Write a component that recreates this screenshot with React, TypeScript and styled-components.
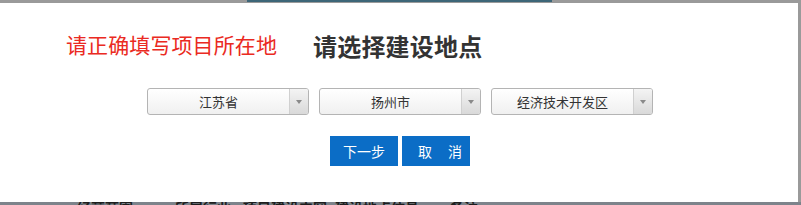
import React from "react";
import styled, { createGlobalStyle } from "styled-components";

const GlobalStyle = createGlobalStyle`
  html, body {
    margin: 0;
    padding: 0;
    background: #9a9a9a;
    overflow: hidden;
  }
  body {
    font-family: "Noto Sans CJK SC", "Noto Sans", sans-serif;
  }
`;

const Page = styled.div`
  width: 801px;
  height: 205px;
  display: flex;
  flex-direction: column;
  background: #9a9a9a;
  overflow: hidden;
`;

const TopStrip = styled.div`
  height: 3px;
  display: flex;
  align-items: flex-start;
  padding-left: 247px;
`;

const TealLine = styled.div`
  width: 305px;
  height: 2px;
  background: #3d6678;
`;

const Dialog = styled.div`
  width: 798px;
  height: 199px;
  background: #ffffff;
  display: flex;
  flex-direction: column;
  box-sizing: border-box;
`;

const Header = styled.div`
  display: flex;
  align-items: center;
  height: 40px;
  margin-top: 23px;
  padding-left: 66px;
`;

const Hint = styled.div`
  font-size: 21px;
  color: #ea2a22;
  line-height: 1;
  width: 247px;
  margin-top: -4px;
  letter-spacing: 0.1px;
`;

const Title = styled.h1`
  margin: 0;
  font-size: 24px;
  font-weight: 700;
  color: #333333;
  line-height: 1;
  letter-spacing: 0.2px;
`;

const SelectRow = styled.div`
  display: flex;
  justify-content: center;
  gap: 10px;
  margin-top: 22px;
  padding-left: 2px;
`;

const SelectBox = styled.div`
  width: 162px;
  height: 27px;
  box-sizing: border-box;
  border: 1px solid #b4b4b4;
  border-radius: 3px;
  display: flex;
  background: linear-gradient(#ffffff, #f0f0f0);
  overflow: hidden;
`;

const SelectText = styled.div`
  flex: 1;
  display: flex;
  align-items: center;
  justify-content: center;
  font-size: 13px;
  color: #333;
`;

const ArrowPart = styled.div`
  width: 18px;
  border-left: 1px solid #d0d0d0;
  background: linear-gradient(#f4f4f4, #d9d9d9);
  display: flex;
  align-items: center;
  justify-content: center;
`;

const Triangle = styled.span`
  width: 0;
  height: 0;
  border-left: 3px solid transparent;
  border-right: 3px solid transparent;
  border-top: 4px solid #8a8a8a;
`;

const ButtonRow = styled.div`
  display: flex;
  justify-content: center;
  gap: 4px;
  margin-top: 21px;
  padding-left: 2px;
`;

const Button = styled.button<{ $wide?: boolean }>`
  width: 68px;
  height: 30px;
  border: none;
  background: #0b6dc6;
  color: #ffffff;
  font-family: inherit;
  font-size: 14px;
  padding: 0;
  cursor: pointer;
  white-space: nowrap;
  letter-spacing: ${(p) => (p.$wide ? "16px" : "0")};
  text-indent: ${(p) => (p.$wide ? "16px" : "0")};
`;

const BottomStrip = styled.div`
  height: 3px;
  display: flex;
  padding-left: 77px;
  overflow: hidden;
  background: #7d838b;
`;

const BgText = styled.span<{ $w: number }>`
  flex: 0 0 ${(p) => p.$w}px;
  font-size: 14px;
  font-weight: 700;
  line-height: 10px;
  color: #1e1e1e;
  white-space: nowrap;
  overflow: hidden;
`;

const Select = ({ value }: { value: string }) => (
  <SelectBox>
    <SelectText>{value}</SelectText>
    <ArrowPart>
      <Triangle />
    </ArrowPart>
  </SelectBox>
);

const App = () => (
  <>
    <GlobalStyle />
    <Page>
      <TopStrip>
        <TealLine />
      </TopStrip>
      <Dialog>
        <Header>
          <Hint>请正确填写项目所在地</Hint>
          <Title>请选择建设地点</Title>
        </Header>
        <SelectRow>
          <Select value="江苏省" />
          <Select value="扬州市" />
          <Select value="经济技术开发区" />
        </SelectRow>
        <ButtonRow>
          <Button>下一步</Button>
          <Button $wide>取消</Button>
        </ButtonRow>
      </Dialog>
      <BottomStrip>
        <BgText $w={98}>经营范围</BgText>
        <BgText $w={68}>所属行业</BgText>
        <BgText $w={92}>项目建设内容</BgText>
        <BgText $w={115}>建设地点信息</BgText>
        <BgText $w={60}>备注</BgText>
      </BottomStrip>
    </Page>
  </>
);

export default App;
